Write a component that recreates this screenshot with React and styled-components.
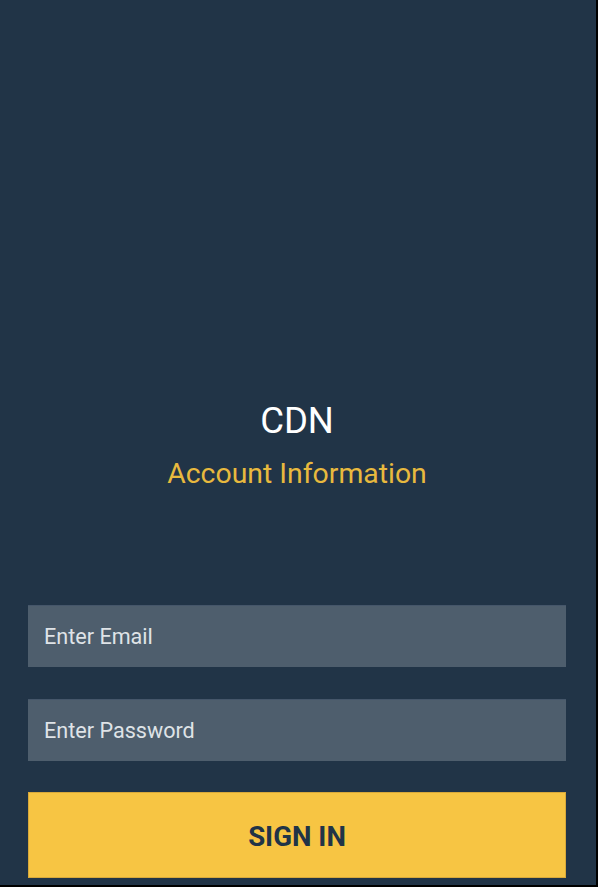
import React from 'react';
import styled, { createGlobalStyle } from 'styled-components';

const GlobalStyle = createGlobalStyle`
  html, body {
    margin: 0;
    padding: 0;
    background-color: #000000;
  }
  body {
    font-family: Roboto, "Noto Sans", "Liberation Sans", sans-serif;
  }
`;

const SignIn = () => {
  return (
    <>
      <GlobalStyle />
      <Screen>
        <Header>
          <Title>CDN</Title>
          <Subtitle>Account Information</Subtitle>
        </Header>
        <Form onSubmit={e => e.preventDefault()}>
          <Field type="email" placeholder="Enter Email" />
          <Field type="password" placeholder="Enter Password" />
          <SubmitButton type="submit">SIGN IN</SubmitButton>
        </Form>
      </Screen>
    </>
  );
};

const Screen = styled.div`
  width: 596px;
  height: 885px;
  box-sizing: border-box;
  padding: 401px 30px 0 28px;
  background-color: #213447;
  display: flex;
  flex-direction: column;
`;

const Header = styled.div`
  display: flex;
  flex-direction: column;
  align-items: center;
  gap: 16px;
`;

const Title = styled.h1`
  margin: 0;
  font-size: 36.5px;
  line-height: 40px;
  font-weight: 400;
  color: #ffffff;
`;

const Subtitle = styled.h2`
  margin: 0;
  font-size: 28.4px;
  line-height: 34px;
  font-weight: 400;
  color: #e8b93e;
`;

const Form = styled.form`
  margin-top: 114px;
  display: flex;
  flex-direction: column;
  gap: 32px;
`;

const Field = styled.input`
  height: 62px;
  box-sizing: border-box;
  padding: 0 16px;
  border: none;
  border-top: 1px solid #45566a;
  background-color: #4e5e6d;
  font-family: Roboto, "Noto Sans", sans-serif;
  font-size: 21.6px;
  color: #ffffff;
  outline: none;

  &::placeholder {
    color: #dfe3e7;
  }
`;

const SubmitButton = styled.button`
  height: 86px;
  margin-top: -1px;
  padding-top: 3px;
  border: 1px solid #d9a93a;
  background-color: #f7c543;
  font-family: Roboto, "Noto Sans", sans-serif;
  font-size: 27.6px;
  font-weight: 700;
  color: #213447;
  cursor: pointer;
`;

export default SignIn;
